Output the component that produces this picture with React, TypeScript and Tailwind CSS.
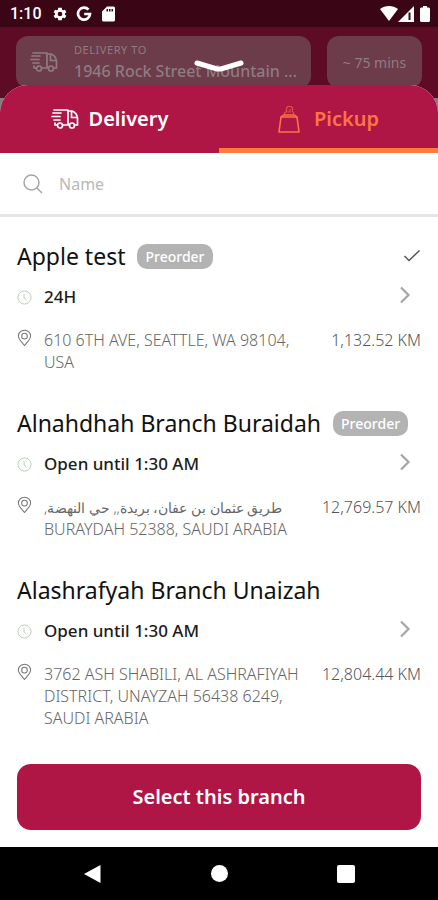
import type { ReactNode } from 'react';

type Branch = {
  name: string;
  preorder: boolean;
  selected?: boolean;
  hours: string;
  address: ReactNode;
  distance: string;
};

const branches: Branch[] = [
  {
    name: 'Apple test',
    preorder: true,
    selected: true,
    hours: '24H',
    address: '610 6TH AVE, SEATTLE, WA 98104, USA',
    distance: '1,132.52 KM',
  },
  {
    name: 'Alnahdhah Branch Buraidah',
    preorder: true,
    hours: 'Open until 1:30 AM',
    address: (
      <>
        <bdi dir="rtl" lang="ar" className="text-[14px] leading-4 whitespace-nowrap">
          طريق عثمان بن عفان، بريدة,, حي النهضة,
        </bdi>{' '}
        BURAYDAH 52388, SAUDI ARABIA
      </>
    ),
    distance: '12,769.57 KM',
  },
  {
    name: 'Alashrafyah Branch Unaizah',
    preorder: false,
    hours: 'Open until 1:30 AM',
    address: '3762 ASH SHABILI, AL ASHRAFIYAH DISTRICT, UNAYZAH 56438 6249, SAUDI ARABIA',
    distance: '12,804.44 KM',
  },
];

function TruckIcon() {
  return (
    <svg aria-hidden="true" width="28" height="22" viewBox="0 0 28 22" fill="none" stroke="currentColor" strokeWidth="1.7" strokeLinecap="round" strokeLinejoin="round" className="shrink-0">
      <path d="M3 2H17V17H12M2 5H10M1 8.500H9M3 12H9M4 15V17H6M17 3H21Q26 5 26.500 10V17H24M18 17H17M20.500 4V9.500H26" />
      <circle cx="9" cy="17.5" r="2.5" />
      <circle cx="21" cy="17.5" r="2.5" />
    </svg>
  );
}

function BagIcon() {
  return (
    <svg aria-hidden="true" width="22" height="28" viewBox="0 0 22 28" fill="none" stroke="currentColor" strokeWidth="1.6" strokeLinejoin="round" className="shrink-0">
      <path d="M3 12H19L21 27H1Z" />
      <path d="M3 12L5.500 10H16.500L19 12" />
      <path d="M6.500 9.500V8L8.500 6.500V3L10 1.500H13L14.500 3V6.500L15.500 8V9.500M9.500 7H12V4" strokeWidth="1.2" opacity="0.65" />
    </svg>
  );
}

function ClockIcon() {
  return (
    <svg aria-hidden="true" width="15" height="15" viewBox="0 0 16 16" fill="none" stroke="#b3cfb4" className="shrink-0">
      <circle cx="8" cy="8" r="7" />
      <path d="M7.5 4V8.5L10 10.5" />
    </svg>
  );
}

function PinIcon() {
  return (
    <svg aria-hidden="true" width="15" height="18" viewBox="0 0 16 18" fill="none" stroke="#777777" strokeWidth="1.1" className="shrink-0">
      <path d="M8 17C5 13 1.5 10 1.5 7a6.500 6.300 0 0 1 13 0C14.500 10 11 13 8 17Z" />
      <circle cx="8" cy="7" r="3" />
    </svg>
  );
}

function StatusBar() {
  return (
    <div className="flex h-[27px] items-center bg-[#3a0615] pr-2 pl-2.5 text-white">
      <span className="font-[Roboto] text-[16px] leading-5 font-medium">1:10</span>
      <svg aria-hidden="true" width="16" height="16" viewBox="0 0 24 24" className="ml-2.5" fill="currentColor">
        <path fillRule="evenodd" d="M19.400 13a7.500 7.500 0 0 0 0-2l2.200-1.700-2.200-3.800-2.600 1a8 8 0 0 0-1.700-1L14.700 2.500H9.300L8.900 5.500a8 8 0 0 0-1.700 1l-2.600-1-2.200 3.800L4.600 11a7.500 7.500 0 0 0 0 2l-2.200 1.700 2.200 3.800 2.600-1a8 8 0 0 0 1.700 1l.4 3h5.400l.4-3a8 8 0 0 0 1.700-1l2.600 1 2.200-3.800ZM12 8.500a3.500 3.500 0 1 1 0 7 3.500 3.500 0 0 1 0-7Z" />
      </svg>
      <svg aria-hidden="true" width="16" height="16" viewBox="0 0 16 16" className="ml-2" fill="none" stroke="currentColor" strokeWidth="2.700">
        <path d="M12.500 3.700A6 6 0 1 0 14 8H8.200" />
      </svg>
      <svg aria-hidden="true" width="13" height="16" viewBox="0 0 13 16" className="ml-2.5" fill="currentColor">
        <path fillRule="evenodd" d="M5 0.500H11.500A1.500 1.500 0 0 1 13 2V14a1.500 1.500 0 0 1-1.500 1.500h-10A1.500 1.500 0 0 1 0 14V5.500ZM4.500 3V5.500H6V3ZM7 3V5.500H8.500V3ZM9.500 3V5.500H11V3Z" />
      </svg>
      <div className="ml-auto flex items-center">
        <svg aria-hidden="true" width="18" height="15" viewBox="0 0 18 15" fill="currentColor">
          <path d="M0 3C5-1 13-1 18 3L9 15Z" />
        </svg>
        <svg aria-hidden="true" width="16" height="16" viewBox="0 0 16 16">
          <path d="M0 16L16 0V16Z" fill="white" />
          <path d="M11.500 6.500V14" stroke="#3a0615" strokeWidth="2" />
        </svg>
        <svg aria-hidden="true" width="10" height="16" viewBox="0 0 10 16" className="ml-1.5" fill="currentColor">
          <path d="M3 0H7V1.500H9L10 2.500V15L9 16H1L0 15V2.500L1 1.500H3Z" />
        </svg>
      </div>
    </div>
  );
}

function DeliveryHeader() {
  return (
    <header className="relative flex h-[71px] gap-4 bg-[#5e0b26] px-4 pt-[9px] text-[#8f7b82]">
      <div className="flex h-[52px] min-w-0 flex-1 items-center gap-4 rounded-xl bg-[#6c3c4a] pr-3 pl-3.5">
        <TruckIcon />
        <div className="min-w-0">
          <p className="text-[11px] leading-[18px] tracking-wider">DELIVERY TO</p>
          <p className="text-[16px] leading-6 font-medium whitespace-nowrap">1946 Rock Street Mountain ...</p>
        </div>
      </div>
      <div className="flex h-[52px] w-[95px] items-center justify-center rounded-xl bg-[#6c3c4a] text-[14px]">~ 75 mins</div>
      <svg aria-hidden="true" width="52" height="14" viewBox="0 0 52 14" className="absolute top-8 left-1/2 -translate-x-1/2" fill="none" stroke="white" strokeWidth="5" strokeLinecap="round">
        <path d="M4 4L24 10H28L48 4" />
      </svg>
    </header>
  );
}

function BranchItem({ branch }: { branch: Branch }) {
  return (
    <li>
      <div className="flex h-[30px] items-center gap-3">
        <h2 className="text-[23px] leading-[30px] whitespace-nowrap text-[#111111]">{branch.name}</h2>
        {branch.preorder && (
          <span className="flex h-[25px] items-center rounded-[10px] bg-[#b3b3b3] px-2 text-[14px] font-medium text-white">Preorder</span>
        )}
        {branch.selected && (
          <svg role="img" aria-label="Selected" width="18" height="14" viewBox="0 0 18 14" className="ml-auto" fill="none" stroke="#555555" strokeWidth="1.500">
            <path d="M1.500 7L6 11.500L16.500 1.500" />
          </svg>
        )}
      </div>
      <div className="mt-3.5 flex h-6 items-center gap-3">
        <ClockIcon />
        <p className="text-[17px] leading-6 font-medium text-[#1c1c1c]">{branch.hours}</p>
        <button type="button" aria-label={`Details of ${branch.name}`} className="mr-2.5 mb-1 ml-auto">
          <svg aria-hidden="true" width="12" height="18" viewBox="0 0 12 18" fill="none" stroke="#a6a6a6" strokeWidth="2.200">
            <path d="M2 1.500L9.500 9L2 16.500" />
          </svg>
        </button>
      </div>
      <div className="mt-5 flex items-start">
        <PinIcon />
        <p className="ml-3 min-w-0 flex-1 text-[16px] leading-[22px] font-light text-[#666666]">{branch.address}</p>
        <p className="ml-[18px] text-[16px] leading-[22px] font-light whitespace-nowrap text-[#555555]">{branch.distance}</p>
      </div>
    </li>
  );
}

export default function App() {
  return (
    <div className="flex min-h-screen flex-col bg-[#7f7f7f] font-['Noto_Sans','DejaVu_Sans',sans-serif]">
      <StatusBar />
      <DeliveryHeader />
      <main className="relative -mt-[13px] flex flex-1 flex-col overflow-hidden rounded-t-[28px] bg-white">
        <div role="tablist" className="grid h-[68px] grid-cols-2 bg-[#b01645] text-[20px] font-semibold">
          <button type="button" role="tab" aria-selected="false" className="flex items-center justify-center gap-2.5 text-white">
            <TruckIcon />
            Delivery
          </button>
          <button type="button" role="tab" aria-selected="true" className="flex items-center justify-center gap-3.5 border-b-[5px] border-[#fb7b3d] pt-[5px] text-[#fb7545]">
            <BagIcon />
            Pickup
          </button>
        </div>
        <label className="flex h-16 items-center gap-4 border-b-3 border-[#e6e6e6] px-[23px]">
          <svg aria-hidden="true" width="20" height="20" viewBox="0 0 20 20" fill="none" stroke="#a6a6a6" strokeWidth="1.500" className="shrink-0">
            <circle cx="8.500" cy="8.500" r="7.500" />
            <path d="M14 14L19 19" />
          </svg>
          <input type="text" aria-label="Name" placeholder="Name" className="min-w-0 flex-1 text-[16px] leading-6 outline-none placeholder:text-[#b8b8b8]" />
        </label>
        <ul className="flex flex-col gap-[35px] px-[17px] pt-6">
          {branches.map((branch) => (
            <BranchItem key={branch.name} branch={branch} />
          ))}
        </ul>
        <div className="mt-auto px-[17px] pb-[17px]">
          <button type="button" className="h-[66px] w-full rounded-[14px] bg-[#b01645] text-[20px] font-semibold text-white">
            Select this branch
          </button>
        </div>
      </main>
      <nav aria-label="System" className="flex h-[53px] items-center justify-between bg-black px-[83px] text-white">
        <button type="button" aria-label="Back">
          <svg aria-hidden="true" width="18" height="20" viewBox="0 0 18 20" fill="currentColor">
            <path d="M17.500 1V19L1 10Z" />
          </svg>
        </button>
        <button type="button" aria-label="Home" className="size-[17px] rounded-full bg-white" />
        <button type="button" aria-label="Recent apps" className="size-[18px] rounded-[2px] bg-white" />
      </nav>
    </div>
  );
}
